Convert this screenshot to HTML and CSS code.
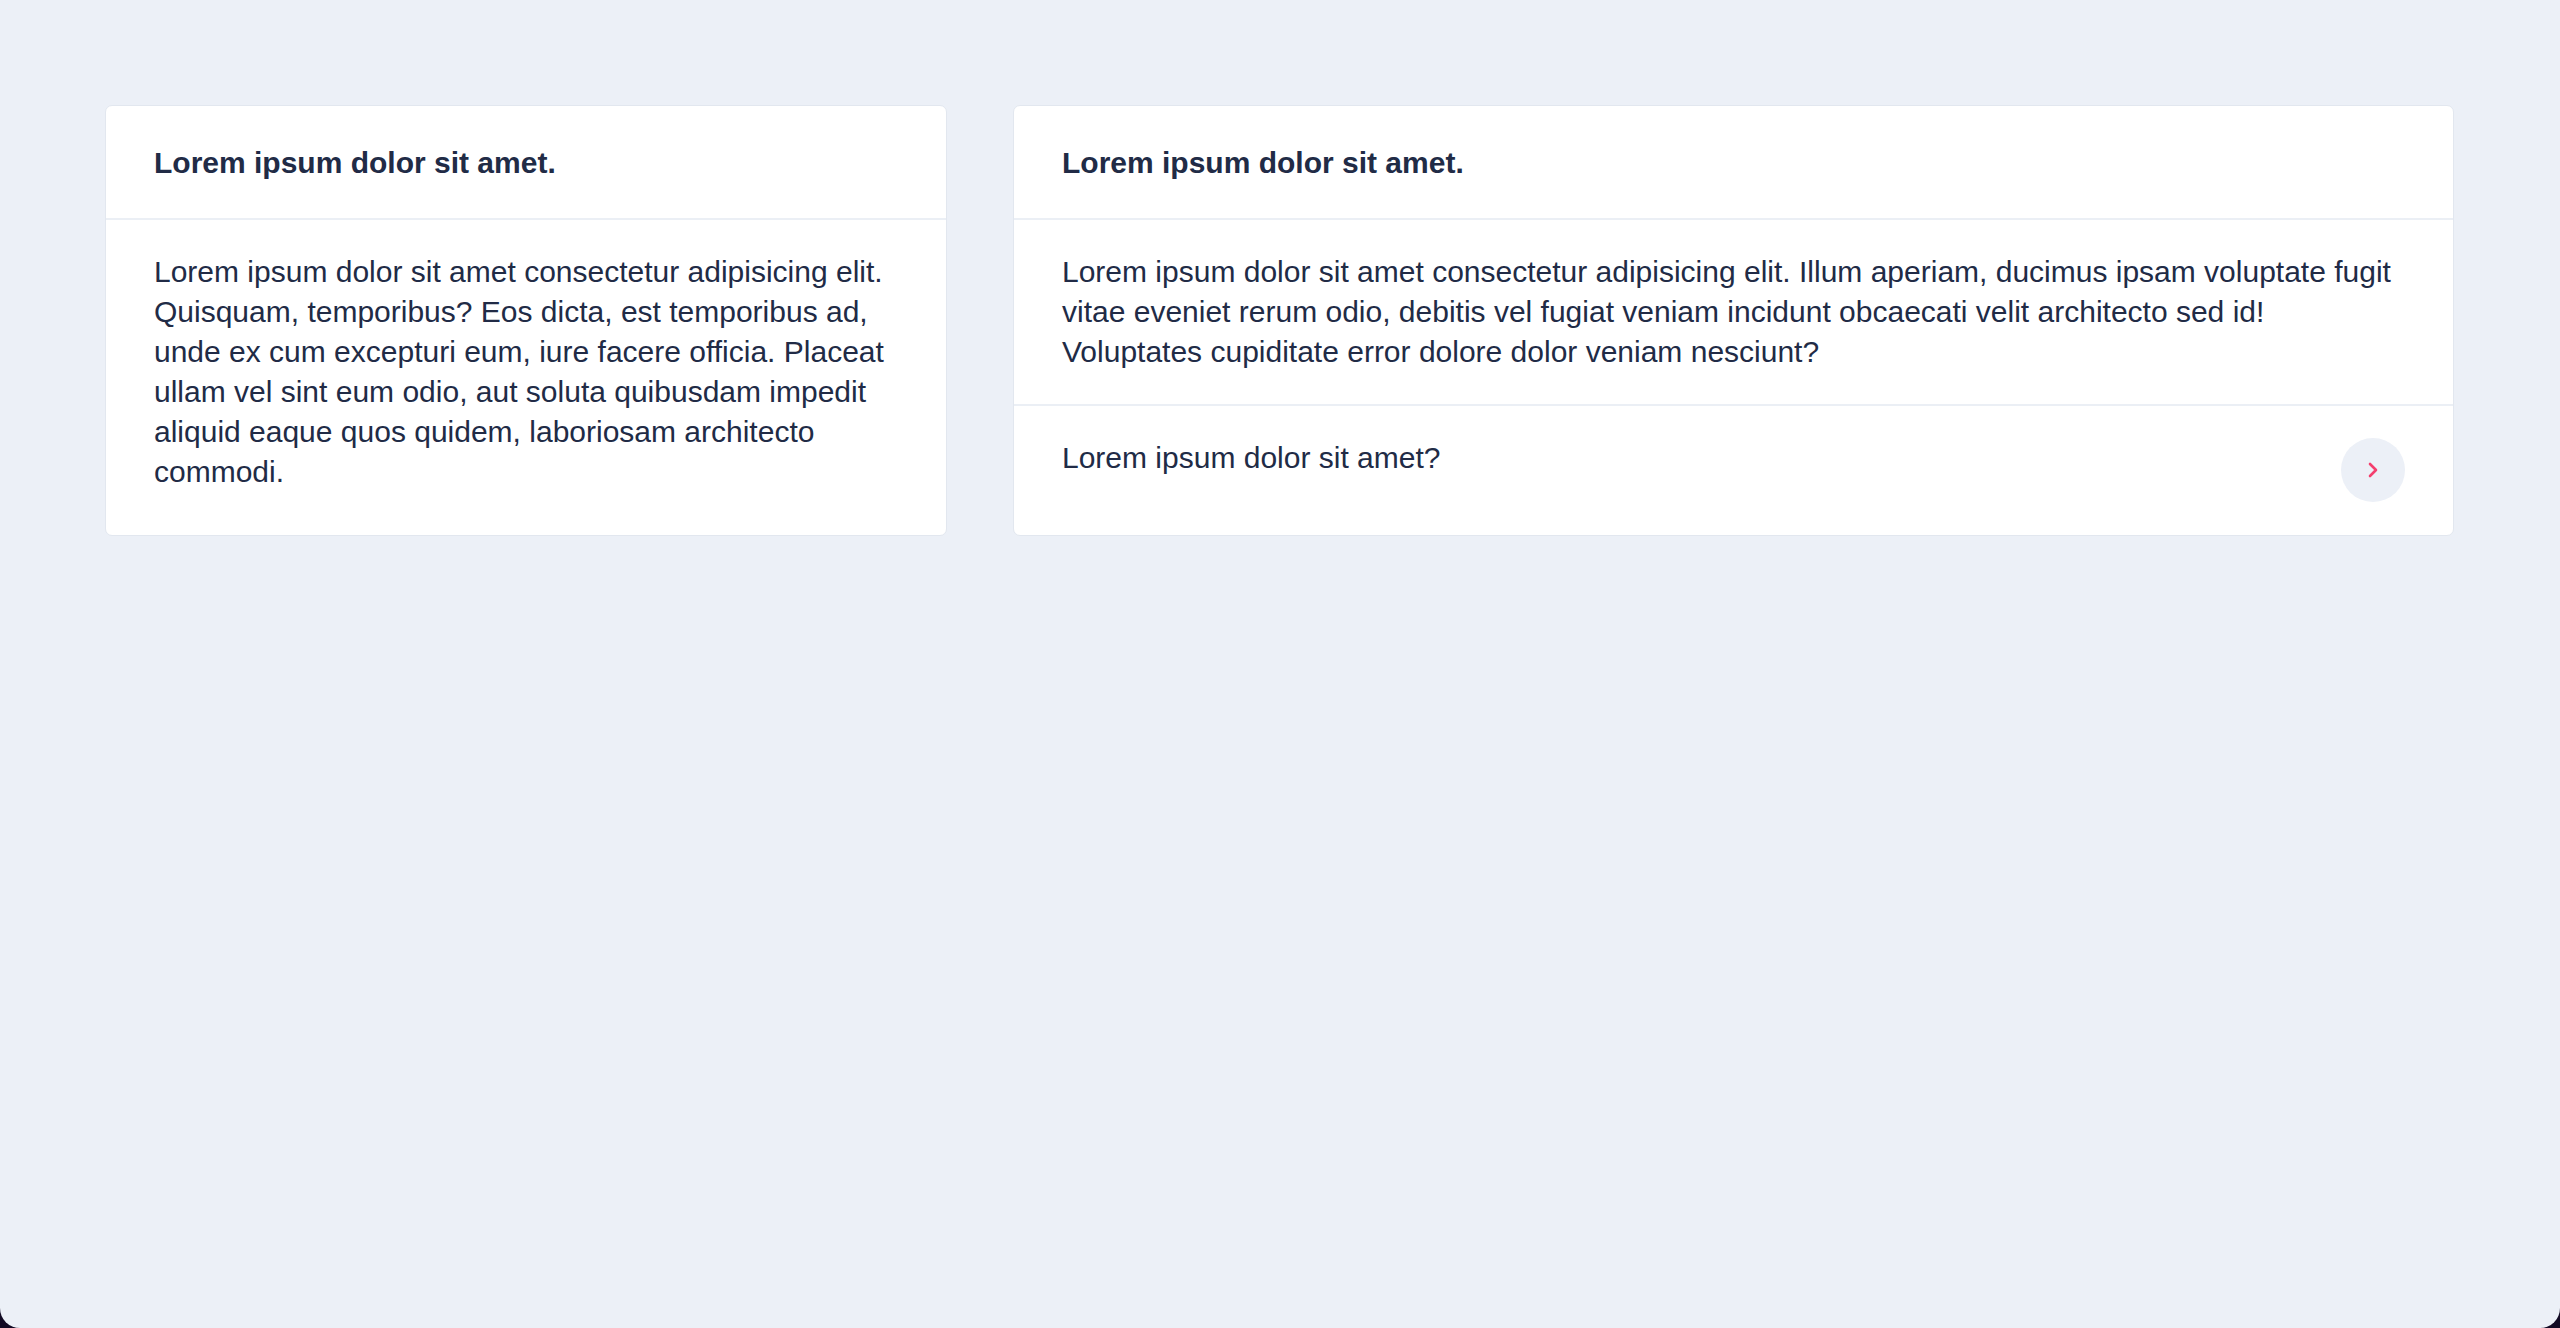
FILE: index.html
```html
<!DOCTYPE html>
<html lang="en">
<head>
<meta charset="utf-8">
<title>Cards</title>
<link rel="stylesheet" href="styles.css">
</head>
<body>
<div class="screen">
  <div class="grid">
    <section class="card">
      <header class="card-header"><h2>Lorem ipsum dolor sit amet.</h2></header>
      <div class="card-body">
        <p>Lorem ipsum dolor sit amet consectetur adipisicing elit. Quisquam, temporibus? Eos dicta, est temporibus ad, unde ex cum excepturi eum, iure facere officia. Placeat ullam vel sint eum odio, aut soluta quibusdam impedit aliquid eaque quos quidem, laboriosam architecto commodi.</p>
      </div>
    </section>
    <section class="card">
      <header class="card-header"><h2>Lorem ipsum dolor sit amet.</h2></header>
      <div class="card-body">
        <p>Lorem ipsum dolor sit amet consectetur adipisicing elit. Illum aperiam, ducimus ipsam voluptate fugit vitae eveniet rerum odio, debitis vel fugiat veniam incidunt obcaecati velit architecto sed id! Voluptates cupiditate error dolore dolor veniam nesciunt?</p>
      </div>
      <div class="card-row">
        <span class="row-text">Lorem ipsum dolor sit amet?</span>
        <button class="round-btn" type="button" aria-label="Open">
          <svg width="12" height="16" viewBox="0 0 12 16" aria-hidden="true"><path d="M3 2 L9 8 L3 14" fill="none" stroke="#f43f6e" stroke-width="2.6" stroke-linecap="round" stroke-linejoin="round"/></svg>
        </button>
      </div>
    </section>
  </div>
</div>
</body>
</html>
```
FILE: styles.css
```css
html, body {
  margin: 0;
  padding: 0;
}
body {
  background: #120a24;
  font-family: "Liberation Sans", Arial, sans-serif;
  color: #212b46;
}
.screen {
  box-sizing: border-box;
  height: 1328px;
  background: #ecf0f7;
  border-radius: 0 0 20px 20px;
  padding: 105px 106px 0 105px;
}
.grid {
  display: grid;
  grid-template-columns: 842px 1fr;
  column-gap: 66px;
  align-items: stretch;
}
.card {
  background: #ffffff;
  border: 1px solid #e2e7ef;
  border-radius: 7px;
  display: flex;
  flex-direction: column;
}
.card-header {
  padding: 37px 48px 35px;
  border-bottom: 2px solid #ebeff5;
}
.card-header h2 {
  margin: 0;
  font-size: 30px;
  line-height: 40px;
  font-weight: 700;
  color: #212b46;
}
.card-body {
  padding: 32px 48px;
  flex: 1;
}
.card-body p {
  margin: 0;
  font-size: 30px;
  line-height: 40px;
}
.card-row {
  border-top: 2px solid #ebeff5;
  padding: 32px 48px 33px;
  display: flex;
  justify-content: space-between;
  align-items: flex-start;
}
.row-text {
  font-size: 30px;
  line-height: 40px;
}
.round-btn {
  width: 64px;
  height: 64px;
  border-radius: 50%;
  border: none;
  background: #ecf0f7;
  display: flex;
  align-items: center;
  justify-content: center;
  padding: 0;
}
```
